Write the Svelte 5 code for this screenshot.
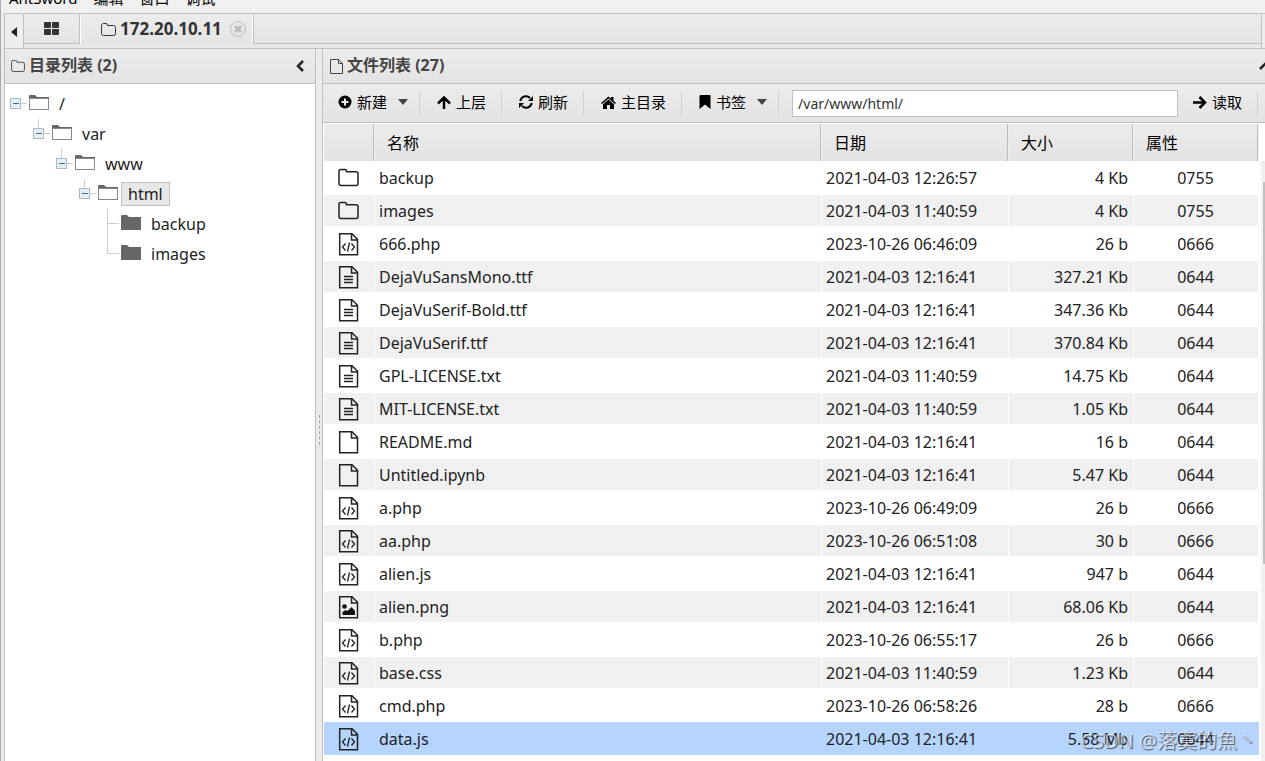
<script>
  const menus = ["AntSword", "编辑", "窗口", "调试"];

  const folders = [
    { name: "/", level: 0, open: true },
    { name: "var", level: 1, open: true },
    { name: "www", level: 2, open: true },
    { name: "html", level: 3, open: true },
    { name: "backup", level: 4, open: false },
    { name: "images", level: 4, open: false, last: true },
  ];

  const files = [
    { type: "folder", name: "backup", date: "2021-04-03 12:26:57", size: "4 Kb", mode: "0755" },
    { type: "folder", name: "images", date: "2021-04-03 11:40:59", size: "4 Kb", mode: "0755" },
    { type: "code", name: "666.php", date: "2023-10-26 06:46:09", size: "26 b", mode: "0666" },
    { type: "text", name: "DejaVuSansMono.ttf", date: "2021-04-03 12:16:41", size: "327.21 Kb", mode: "0644" },
    { type: "text", name: "DejaVuSerif-Bold.ttf", date: "2021-04-03 12:16:41", size: "347.36 Kb", mode: "0644" },
    { type: "text", name: "DejaVuSerif.ttf", date: "2021-04-03 12:16:41", size: "370.84 Kb", mode: "0644" },
    { type: "text", name: "GPL-LICENSE.txt", date: "2021-04-03 11:40:59", size: "14.75 Kb", mode: "0644" },
    { type: "text", name: "MIT-LICENSE.txt", date: "2021-04-03 11:40:59", size: "1.05 Kb", mode: "0644" },
    { type: "file", name: "README.md", date: "2021-04-03 12:16:41", size: "16 b", mode: "0644" },
    { type: "file", name: "Untitled.ipynb", date: "2021-04-03 12:16:41", size: "5.47 Kb", mode: "0644" },
    { type: "code", name: "a.php", date: "2023-10-26 06:49:09", size: "26 b", mode: "0666" },
    { type: "code", name: "aa.php", date: "2023-10-26 06:51:08", size: "30 b", mode: "0666" },
    { type: "code", name: "alien.js", date: "2021-04-03 12:16:41", size: "947 b", mode: "0644" },
    { type: "image", name: "alien.png", date: "2021-04-03 12:16:41", size: "68.06 Kb", mode: "0644" },
    { type: "code", name: "b.php", date: "2023-10-26 06:55:17", size: "26 b", mode: "0666" },
    { type: "code", name: "base.css", date: "2021-04-03 11:40:59", size: "1.23 Kb", mode: "0644" },
    { type: "code", name: "cmd.php", date: "2023-10-26 06:58:26", size: "28 b", mode: "0666" },
    { type: "code", name: "data.js", date: "2021-04-03 12:16:41", size: "5.58 Mb", mode: "0644" },
  ];

  let currentFolder = $state("html");
  let selectedFile = $state("data.js");
  let path = $state("/var/www/html/");
</script>

{#snippet caret()}
  <svg class="caret" width="10" height="6" viewBox="0 0 10 6" aria-hidden="true">
    <path d="M0 0h10L5 6z" fill="#444" />
  </svg>
{/snippet}

<div class="window">
  <nav class="menubar">
    {#each menus as menu}
      <button>{menu}</button>
    {/each}
  </nav>

  <div class="workspace">
    <div class="tabbar">
      <button class="scroll-left" aria-label="Scroll tabs left">
        <svg width="6" height="10" viewBox="0 0 6 10"><path d="M6 0v10L0 5z" fill="#222" /></svg>
      </button>
      <button class="tab home" aria-label="Home">
        <svg width="15" height="13" viewBox="0 0 15 13" fill="#333">
          <rect width="7" height="6" rx="1" />
          <rect x="8" width="7" height="6" rx="1" />
          <rect y="7" width="7" height="6" rx="1" />
          <rect x="8" y="7" width="7" height="6" rx="1" />
        </svg>
      </button>
      <div class="tab active">
        <svg width="15" height="13" viewBox="0 0 15 13" fill="none" stroke="#333">
          <path d="M.5 10.500v-8q0-2 2-2h2.500q1.500 0 1.500 2h6q2 0 2 2v6q0 2-2 2h-10q-2 0-2-2z" />
        </svg>
        <span>172.20.10.11</span>
        <button class="close" aria-label="Close tab">
          <svg width="16" height="16" viewBox="0 0 16 16" fill="none" stroke="#bbb">
            <circle cx="8" cy="8" r="7.500" />
            <path d="M5 5l6 6M11 5l-6 6" stroke-width="3" />
          </svg>
        </button>
      </div>
      <div class="tab-rest"></div>
      <div class="scroll-right"></div>
    </div>

    <div class="panels">
      <aside class="panel tree-panel">
        <header class="panel-header">
          <svg width="14" height="12" viewBox="0 0 15 13" fill="none" stroke="#444">
            <path d="M.5 10.500v-8q0-2 2-2h2.500q1.500 0 1.500 2h6q2 0 2 2v6q0 2-2 2h-10q-2 0-2-2z" />
          </svg>
          <h2>目录列表 (2)</h2>
          <button class="collapse" aria-label="Collapse">
            <svg width="8" height="12" viewBox="0 0 8 12" fill="none" stroke="#222" stroke-width="2.500">
              <path d="M7 1L2 6l5 5" />
            </svg>
          </button>
        </header>
        <ul class="tree">
          {#each folders as folder}
            <li style="padding-left: {folder.level * 23}px">
              <svg class="branch" width="19" height="30" viewBox="0 0 19 30" shape-rendering="crispEdges">
                {#if folder.open}
                  {#if folder.level > 0}
                    <path d="M5.500 0v10" stroke="#ccc" />
                  {/if}
                  <path d="M11 14.500h6" stroke="#ccc" />
                  <rect x=".5" y="9.500" width="10" height="10" rx="1" fill="#e4eef3" stroke="#a9bac5" />
                  <path d="M3 14.500h6" stroke="#456f87" />
                {:else}
                  <path d="M5.500 0v{folder.last ? 14.5 : 30}M5 14.500h12" fill="none" stroke="#ccc" />
                {/if}
              </svg>
              <svg width="20" height="20" viewBox="0 0 20 20">
                {#if folder.open}
                  <path d="M0 6V2q0-1 1-1h5l2 2h12v3z" fill="#666" />
                  <rect x=".5" y="4.500" width="19" height="11" fill="#fff" stroke="#888" />
                {:else}
                  <path d="M0 16V2q0-1 1-1h5l2 2h12v13z" fill="#666" />
                {/if}
              </svg>
              <button
                class="label"
                class:current={currentFolder === folder.name}
                onclick={() => (currentFolder = folder.name)}>{folder.name}</button
              >
            </li>
          {/each}
        </ul>
      </aside>

      <div class="splitter"></div>

      <main class="panel files-panel">
        <header class="panel-header">
          <svg width="13" height="15" viewBox="0 0 13 15" fill="none" stroke="#444">
            <path d="M.5.500h8l4 4v10H.5zM8.500.500v4h4" />
          </svg>
          <h2>文件列表 (27)</h2>
          <button class="collapse clipped" aria-label="Collapse">
            <svg width="12" height="8" viewBox="0 0 12 8" fill="none" stroke="#222" stroke-width="2.500">
              <path d="M1 7l5-5 5 5" />
            </svg>
          </button>
        </header>

        <div class="toolbar">
          <button class="tool">
            <svg width="14" height="14" viewBox="0 0 14 14">
              <circle cx="7" cy="7" r="6.500" />
              <path d="M7 3.500v7M3.500 7h7" stroke="#eee" stroke-width="2" />
            </svg>
            新建
            {@render caret()}
          </button>
          <button class="tool">
            <svg width="14" height="13" viewBox="0 0 14 13" fill="none" stroke="#000" stroke-width="2.500">
              <path d="M7 13V2M1 7.500l6-6 6 6" />
            </svg>
            上层
          </button>
          <button class="tool">
            <svg width="14" height="14" viewBox="0 0 14 14" fill="none" stroke="#000" stroke-width="2">
              <path d="M1.300 6A5.700 5.700 0 0 1 11 3M12.700 8A5.700 5.700 0 0 1 3 11" />
              <path d="M14 1v5H9zM0 13V8h5z" fill="#000" stroke="none" />
            </svg>
            刷新
          </button>
          <button class="tool">
            <svg width="15" height="13" viewBox="0 0 15 13">
              <path d="M0 7l7.500-6.500L10 2.700V1h2.500v3.800L15 7l-1 1-6.500-5.500L1 8z" />
              <path d="M2 8.200l5.500-4.700L13 8.200V13H9V9H6v4H2z" />
            </svg>
            主目录
          </button>
          <button class="tool">
            <svg width="12" height="14" viewBox="0 0 12 14">
              <path d="M.5 1q0-1 1-1h9q1 0 1 1v13L6 9.500.5 14z" />
            </svg>
            书签
            {@render caret()}
          </button>
          <input type="text" aria-label="路径" bind:value={path} />
          <button class="tool read">
            <svg width="14" height="13" viewBox="0 0 14 13" fill="none" stroke="#000" stroke-width="2.500">
              <path d="M0 6.500h11M6.500 1l5.500 5.500L6.500 12" />
            </svg>
            读取
          </button>
        </div>

        <div class="grid">
          <table>
            <thead>
              <tr>
                <th class="col-icon"></th>
                <th>名称</th>
                <th class="col-date">日期</th>
                <th class="col-size">大小</th>
                <th class="col-mode">属性</th>
              </tr>
            </thead>
            <tbody>
              {#each files as file}
                <tr class:selected={selectedFile === file.name} onclick={() => (selectedFile = file.name)}>
                  <td class="icon">
                    <svg width="22" height="24" viewBox="0 0 22 24" fill="none" stroke="#222" stroke-width="1.500">
                      {#if file.type === "folder"}
                        <path d="M1 17.500V5.500q0-2 2-2h4q1.500 0 1.500 2.300H18q2 0 2 2v9.700q0 2-2 2H3q-2 0-2-2z" />
                      {:else}
                        <path d="M1.700 1.700H14l5.500 5.500v15.500H1.700zM13.500 1.700V8h6" />
                      {/if}
                      {#if file.type === "code"}
                        <path d="M7.500 11.500l-3 3.500 3 3.500M13.500 11.500l3 3.500-3 3.500M11.500 10.500l-2 9" stroke-width="1.300" />
                      {:else if file.type === "text"}
                        <path d="M6 11.500h9M6 14.500h9M6 17.500h9" />
                      {:else if file.type === "image"}
                        <circle cx="6.500" cy="11.500" r="2.300" fill="#111" stroke="none" />
                        <path d="M4.500 20v-3l3-2 2 1 4-4 3.500 4v4z" fill="#111" stroke="none" />
                      {/if}
                    </svg>
                  </td>
                  <td>{file.name}</td>
                  <td>{file.date}</td>
                  <td class="size">{file.size}</td>
                  <td class="mode">{file.mode}</td>
                </tr>
              {/each}
            </tbody>
          </table>
          <div class="scrollbar"><div class="thumb"></div></div>
        </div>
      </main>
    </div>
  </div>

  <div class="watermark">CSDN @落寞的魚丶</div>
</div>

<style>
  :global(body) {
    margin: 0;
    overflow: hidden;
  }

  .window {
    position: relative;
    display: flex;
    flex-direction: column;
    height: 100vh;
    overflow: hidden;
    box-sizing: border-box;
    border-left: 1px solid #aaa;
    background: #ebebeb;
    color: #222;
    font: 16px/20px "Noto Sans", "Noto Sans CJK SC", sans-serif;
  }

  button {
    padding: 0;
    border: none;
    background: none;
    color: inherit;
    font: inherit;
    white-space: nowrap;
    cursor: pointer;
  }

  svg {
    display: block;
    flex: none;
  }

  .menubar {
    display: flex;
    flex: none;
    align-items: flex-end;
    gap: 16px;
    height: 8px;
    padding: 0 8px 5px;
    overflow: hidden;
    background: #f0f0f0;
    font-size: 15px;
    color: #000;
  }

  .workspace {
    display: flex;
    flex: 1;
    flex-direction: column;
    min-height: 0;
    margin-left: 3px;
    border-top: 1px solid #c0c0c0;
    border-left: 1px solid #c0c0c0;
  }

  .tabbar {
    display: flex;
    flex: none;
    align-items: flex-start;
    height: 34px;
    border-bottom: 1px solid #c0c0c0;
    background: #e8e8e8;
  }

  .scroll-left {
    display: flex;
    align-items: center;
    justify-content: center;
    width: 19px;
    height: 34px;
    padding-top: 2px;
    box-sizing: border-box;
    border-right: 1px solid #c0c0c0;
    background: #ededed;
  }

  .tab,
  .tab-rest {
    height: 30px;
    box-sizing: border-box;
    border-bottom: 1px solid #c0c0c0;
    background: linear-gradient(#ececec, #e4e4e4);
  }

  .tab {
    display: flex;
    align-items: center;
    justify-content: center;
    border-right: 1px solid #c0c0c0;
  }

  .home {
    width: 56px;
  }

  .active {
    gap: 4px;
    padding: 0 7px 0 21px;
    border-bottom: none;
    box-shadow: inset 1px 0 #fff, inset -1px 0 #fff;
    font-size: 17px;
    font-weight: bold;
    color: #333;
  }

  .close {
    margin-left: 4px;
  }

  .tab-rest {
    flex: 1;
  }

  .scroll-right {
    width: 3px;
    height: 34px;
    border-left: 1px solid #c0c0c0;
    background: #ededed;
  }

  .panels {
    display: flex;
    flex: 1;
    min-height: 0;
  }

  .panel {
    display: flex;
    flex-direction: column;
    min-height: 0;
    overflow: hidden;
    background: #fff;
  }

  .tree-panel {
    flex: none;
    width: 310px;
    border-right: 1px solid #c0c0c0;
  }

  .files-panel {
    flex: 1;
    min-width: 0;
    border-left: 1px solid #c0c0c0;
  }

  .panel-header {
    display: flex;
    flex: none;
    align-items: center;
    gap: 4px;
    height: 34px;
    padding: 0 11px 0 6px;
    border-bottom: 1px solid #c0c0c0;
    background: linear-gradient(#ececec, #e3e3e3);
  }

  .files-panel .panel-header {
    padding-left: 7px;
  }

  h2 {
    margin: 0;
    padding-bottom: 2px;
    font-size: 16px;
    font-weight: bold;
    color: #444;
  }

  .collapse {
    margin-left: auto;
  }

  .collapse.clipped {
    margin-right: -17px;
  }

  .tree {
    margin: 0;
    padding: 5px 5px 0;
    list-style: none;
  }

  .tree li {
    display: flex;
    align-items: center;
    height: 30px;
  }

  .label {
    margin-left: 3px;
    padding: 1px 6px;
    border: 1px solid transparent;
  }

  .label.current {
    border-color: #c0c0c0;
    background: #e8e8e8;
  }

  .splitter {
    display: flex;
    flex: none;
    align-items: center;
    justify-content: center;
    width: 6px;
  }

  .splitter::before {
    content: "";
    height: 30px;
    margin-top: 50px;
    border-left: 1px dashed #aaa;
  }

  .toolbar {
    display: flex;
    flex: none;
    align-items: center;
    height: 38px;
    border-bottom: 1px solid #c0c0c0;
    background: linear-gradient(#ececec, #e3e3e3);
  }

  .tool {
    display: flex;
    align-items: center;
    gap: 5px;
    height: 25px;
    padding: 0 15px 2px 17px;
    box-sizing: border-box;
    border-right: 1px solid #c5d3dc;
    font-size: 15px;
    color: #000;
  }

  .tool:first-child {
    padding-left: 15px;
  }

  .tool .caret {
    margin-left: 6px;
    margin-right: -4px;
  }

  .toolbar input {
    flex: 1;
    min-width: 0;
    height: 27px;
    box-sizing: border-box;
    margin-left: 13px;
    padding: 0 5px;
    border: 1px solid #c0c0c0;
    outline: none;
    background: #fff;
    color: #333;
    font: 14px "Noto Sans", sans-serif;
  }

  .tool.read {
    margin-right: 7px;
    padding-left: 15px;
  }

  .grid {
    display: flex;
    flex: 1;
    align-items: flex-start;
    justify-content: space-between;
    min-height: 0;
    padding-left: 1px;
    overflow: hidden;
  }

  table {
    width: calc(100% - 6px);
    table-layout: fixed;
    border-collapse: separate;
    border-spacing: 0;
  }

  th {
    height: 38px;
    box-sizing: border-box;
    padding: 0 12px;
    border-top: 1px solid #fff;
    background: linear-gradient(#ececec, #e3e3e3);
    box-shadow: inset -1px 0 #eee, inset -2px 0 #bcbcbc;
    font-weight: normal;
    text-align: left;
    color: #000;
  }

  .col-icon {
    width: 51px;
  }

  .col-date {
    width: 187px;
  }

  .col-size,
  .col-mode {
    width: 125px;
  }

  td {
    height: 33px;
    box-sizing: border-box;
    padding: 0 5px 0 4px;
    border: 1px solid #fff;
    border-left: none;
  }

  td.icon {
    padding: 0 0 0 14px;
  }

  td.size {
    text-align: right;
  }

  td.mode {
    text-align: center;
  }

  tbody tr:nth-child(even) td {
    background: #f0f0f0;
  }

  tbody tr.selected td {
    border-color: #b5d5ff;
    background: #b5d5ff;
  }

  .scrollbar {
    align-self: stretch;
    width: 4px;
    margin-top: 38px;
    padding-top: 21px;
    box-sizing: border-box;
    background: #f1f1f1;
  }

  .thumb {
    height: 66%;
    margin-left: 2px;
    background: #c1c1c1;
  }

  .watermark {
    position: absolute;
    right: 8px;
    bottom: 8px;
    color: rgba(255, 255, 255, 0.6);
    text-shadow: 1px 1px 1px rgba(0, 0, 0, 0.6);
    font-size: 20px;
    line-height: 24px;
    pointer-events: none;
  }
</style>
